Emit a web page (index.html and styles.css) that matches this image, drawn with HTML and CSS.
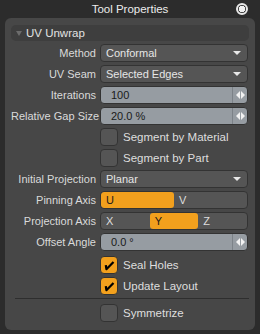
FILE: index.html
```html
<!DOCTYPE html>
<html lang="en">
<head>
    <meta charset="UTF-8">
    <title>Tool Properties</title>
    <link rel="stylesheet" href="styles.css">
</head>
<body>
    <div class="titlebar">
        <span class="title">Tool Properties</span>
        <span class="pin"></span>
    </div>

    <div class="panel">
        <div class="section-head"><span class="tri"></span>UV Unwrap</div>

        <div class="form">
            <div class="row">
                <label>Method</label>
                <div class="dropdown">Conformal<span class="arrow"></span></div>
            </div>
            <div class="row">
                <label>UV Seam</label>
                <div class="dropdown">Selected Edges<span class="arrow"></span></div>
            </div>
            <div class="row">
                <label>Iterations</label>
                <div class="field"><span class="value">100</span><span class="handle"><i class="l"></i><i class="r"></i></span></div>
            </div>
            <div class="row">
                <label>Relative Gap Size</label>
                <div class="field"><span class="value">20.0 %</span><span class="handle"><i class="l"></i><i class="r"></i></span></div>
            </div>
            <div class="row">
                <label></label>
                <div class="check"><span class="box"></span>Segment by Material</div>
            </div>
            <div class="row">
                <label></label>
                <div class="check"><span class="box"></span>Segment by Part</div>
            </div>
            <div class="row">
                <label>Initial Projection</label>
                <div class="dropdown">Planar<span class="arrow"></span></div>
            </div>
            <div class="row">
                <label>Pinning Axis</label>
                <div class="toggle">
                    <span class="opt on">U</span>
                    <span class="opt">V</span>
                </div>
            </div>
            <div class="row">
                <label>Projection Axis</label>
                <div class="toggle">
                    <span class="opt">X</span>
                    <span class="opt on">Y</span>
                    <span class="opt">Z</span>
                </div>
            </div>
            <div class="row">
                <label>Offset Angle</label>
                <div class="field"><span class="value">0.0 °</span><span class="handle"><i class="l"></i><i class="r"></i></span></div>
            </div>
            <div class="row seal">
                <label></label>
                <div class="check"><span class="box on">
                    <svg width="12" height="12" viewBox="0 0 12 12"><path d="M2.8 6.2 L3.4 10.2 L10.5 3" fill="none" stroke="#000" stroke-width="2.2" stroke-linejoin="round"/></svg>
                </span>Seal Holes</div>
            </div>
            <div class="row">
                <label></label>
                <div class="check"><span class="box on">
                    <svg width="12" height="12" viewBox="0 0 12 12"><path d="M2.8 6.2 L3.4 10.2 L10.5 3" fill="none" stroke="#000" stroke-width="2.2" stroke-linejoin="round"/></svg>
                </span>Update Layout</div>
            </div>
        </div>

        <div class="separator"></div>

        <div class="form">
            <div class="row">
                <label></label>
                <div class="check"><span class="box"></span>Symmetrize</div>
            </div>
        </div>
    </div>
</body>
</html>
```

FILE: styles.css
```css
* {
    margin: 0;
    padding: 0;
    box-sizing: border-box;
}

body {
    font-family: 'Liberation Sans', Arial, sans-serif;
    font-size: 11px;
    background: #2c2c2c;
    color: #dedede;
    width: 260px;
    height: 334px;
    overflow: hidden;
    white-space: nowrap;
}

.titlebar {
    height: 18px;
    display: flex;
    align-items: center;
    justify-content: center;
    position: relative;
    color: #ececec;
    font-size: 11.5px;
}

.pin {
    position: absolute;
    right: 12px;
    top: 3px;
    width: 12px;
    height: 12px;
    border-radius: 50%;
    border: 2px solid #e8e8e8;
    background: radial-gradient(circle, #f0f0f0 0 3px, #3a3a3a 3.5px);
}

.panel {
    margin: 0 5px;
    height: 312px;
    background: #474747;
    border-radius: 6px;
    padding: 7px 6px 0 6px;
}

.section-head {
    height: 16px;
    background: #3e3e3e;
    border-radius: 5px;
    display: flex;
    align-items: center;
    padding-left: 5px;
    color: #e2e2e2;
    font-size: 11.5px;
}

.tri {
    width: 0;
    height: 0;
    border-left: 3.5px solid transparent;
    border-right: 3.5px solid transparent;
    border-top: 5px solid #6c6c6c;
    margin-right: 4px;
}

.form {
    display: flex;
    flex-direction: column;
    gap: 3px;
    margin-top: 3px;
}

.row {
    display: grid;
    grid-template-columns: 85px 148px;
    column-gap: 4px;
    height: 18px;
    align-items: center;
}

.row.seal {
    margin-top: 2px;
}

.row label {
    text-align: right;
    color: #dadada;
}

.dropdown {
    height: 18px;
    background: #555555;
    border: 1px solid #333333;
    border-radius: 4px;
    padding-left: 5px;
    display: flex;
    align-items: center;
    justify-content: space-between;
    color: #e6e6e6;
}

.arrow {
    width: 0;
    height: 0;
    border-left: 4px solid transparent;
    border-right: 4px solid transparent;
    border-top: 4px solid #e8e8e8;
    margin-right: 6px;
}

.field {
    height: 18px;
    background: #969ca2;
    border: 1px solid #333333;
    border-radius: 4px;
    display: flex;
    align-items: center;
    overflow: hidden;
    color: #1a1a1a;
}

.field .value {
    flex: 1;
    padding-left: 10px;
}

.handle {
    width: 15px;
    height: 100%;
    border-left: 1px solid #7c8288;
    display: flex;
    align-items: center;
    justify-content: center;
    gap: 1px;
}

.handle i {
    width: 0;
    height: 0;
    border-top: 4px solid transparent;
    border-bottom: 4px solid transparent;
}

.handle .l {
    border-right: 4px solid #f2f2f2;
}

.handle .r {
    border-left: 4px solid #f2f2f2;
}

.check {
    display: flex;
    align-items: center;
    gap: 5px;
    color: #dedede;
    font-size: 11.5px;
}

.box {
    width: 18px;
    height: 18px;
    border-radius: 4px;
    background: #555555;
    border: 1px solid #333333;
    display: flex;
    align-items: center;
    justify-content: center;
}

.box.on {
    background: #f2a01d;
}

.toggle {
    height: 18px;
    display: flex;
    background: #555555;
    border: 1px solid #333333;
    border-radius: 4px;
    overflow: hidden;
}

.opt {
    flex: 1;
    display: flex;
    align-items: center;
    padding-left: 5px;
    color: #dedede;
}

.opt.on {
    background: #f2a01d;
    color: #1a1a1a;
    border-radius: 3px;
}

.separator {
    height: 1px;
    background: #2e2e2e;
    margin: 3px 0 5px 4px;
}
```
